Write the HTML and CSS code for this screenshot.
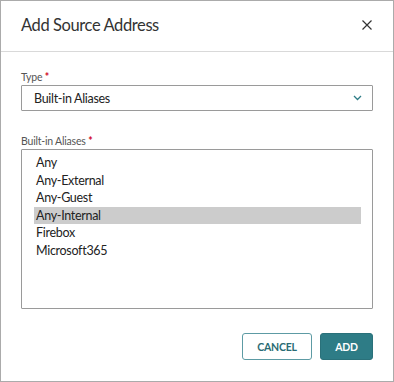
FILE: index.html
```html
<!DOCTYPE html>
<html lang="en">
<head>
    <meta charset="UTF-8">
    <title>Add Source Address</title>
    <link rel="stylesheet" href="styles.css">
</head>
<body>
    <div class="dialog">
        <div class="dialog-header">
            <h1>Add Source Address</h1>
            <span class="close-btn">
                <svg width="10" height="10" viewBox="0 0 10 10"><path d="M0.5 0.5 L9.5 9.5 M9.5 0.5 L0.5 9.5" stroke="#333" stroke-width="1.2" fill="none"/></svg>
            </span>
        </div>

        <div class="dialog-body">
            <label class="field-label">Type <span class="req">*</span></label>
            <div class="select-box">
                <span>Built-in Aliases</span>
                <svg width="9" height="6" viewBox="0 0 9 6"><path d="M1 1 L4.5 4.5 L8 1" stroke="#2e7c86" stroke-width="1.3" fill="none"/></svg>
            </div>

            <label class="field-label list-label">Built-in Aliases <span class="req">*</span></label>
            <ul class="alias-list">
                <li>Any</li>
                <li>Any-External</li>
                <li>Any-Guest</li>
                <li class="selected">Any-Internal</li>
                <li>Firebox</li>
                <li>Microsoft365</li>
            </ul>
        </div>

        <div class="dialog-footer">
            <button class="btn btn-outline">CANCEL</button>
            <button class="btn btn-primary">ADD</button>
        </div>
    </div>
</body>
</html>
```

FILE: styles.css
```css
body {
    margin: 0;
    font-family: Lato, 'Open Sans', sans-serif;
    color: #222;
    background: #fff;
}
.dialog {
    width: 394px;
    height: 382px;
    box-sizing: border-box;
    border: 1px solid #ababab;
    display: flex;
    flex-direction: column;
}
.dialog-header {
    height: 50px;
    border-bottom: 1px solid #d9d9d9;
    display: flex;
    align-items: center;
    justify-content: space-between;
    padding: 0 21px 0 20px;
}
.dialog-header h1 {
    margin: 0;
    font-size: 16.5px;
    font-weight: 400;
    letter-spacing: -0.4px;
    color: #333;
    padding-bottom: 2px;
}
.close-btn {
    display: flex;
    padding-bottom: 2px;
}
.dialog-body {
    padding: 18px 20px 0 20px;
    display: flex;
    flex-direction: column;
}
.field-label {
    font-size: 10.5px;
    color: #555;
    line-height: 14px;
    margin-bottom: 1px;
    letter-spacing: -0.2px;
}
.req {
    color: #d0021b;
    font-weight: 700;
}
.select-box {
    height: 26px;
    box-sizing: border-box;
    border: 1px solid #9a9a9a;
    border-radius: 1px;
    display: flex;
    align-items: center;
    justify-content: space-between;
    padding: 0 10px 0 12px;
    font-size: 12.5px;
    letter-spacing: -0.3px;
    color: #222;
}
.list-label {
    margin-top: 23px;
    margin-bottom: 1px;
}
.alias-list {
    list-style: none;
    margin: 0;
    height: 160px;
    box-sizing: border-box;
    border: 1px solid #9a9a9a;
    border-radius: 1px;
    padding: 4px 11px 0 12px;
}
.alias-list li {
    font-size: 12.5px;
    line-height: 17.6px;
    letter-spacing: -0.3px;
    padding-left: 2px;
    color: #222;
}
.alias-list li.selected {
    background: #cccccc;
}
.dialog-footer {
    margin-top: auto;
    display: flex;
    justify-content: flex-end;
    gap: 8px;
    padding: 0 20px 21px 0;
}
.btn {
    height: 27px;
    box-sizing: border-box;
    border-radius: 3px;
    font-family: Lato, 'Open Sans', sans-serif;
    font-size: 10.5px;
    font-weight: 700;
    letter-spacing: -0.2px;
    cursor: pointer;
}
.btn-outline {
    width: 70px;
    background: #fff;
    border: 1px solid #5d9ba4;
    color: #2a6b74;
}
.btn-primary {
    width: 53px;
    background: #2e7c86;
    border: 1px solid #2a717a;
    color: #fff;
}
```
